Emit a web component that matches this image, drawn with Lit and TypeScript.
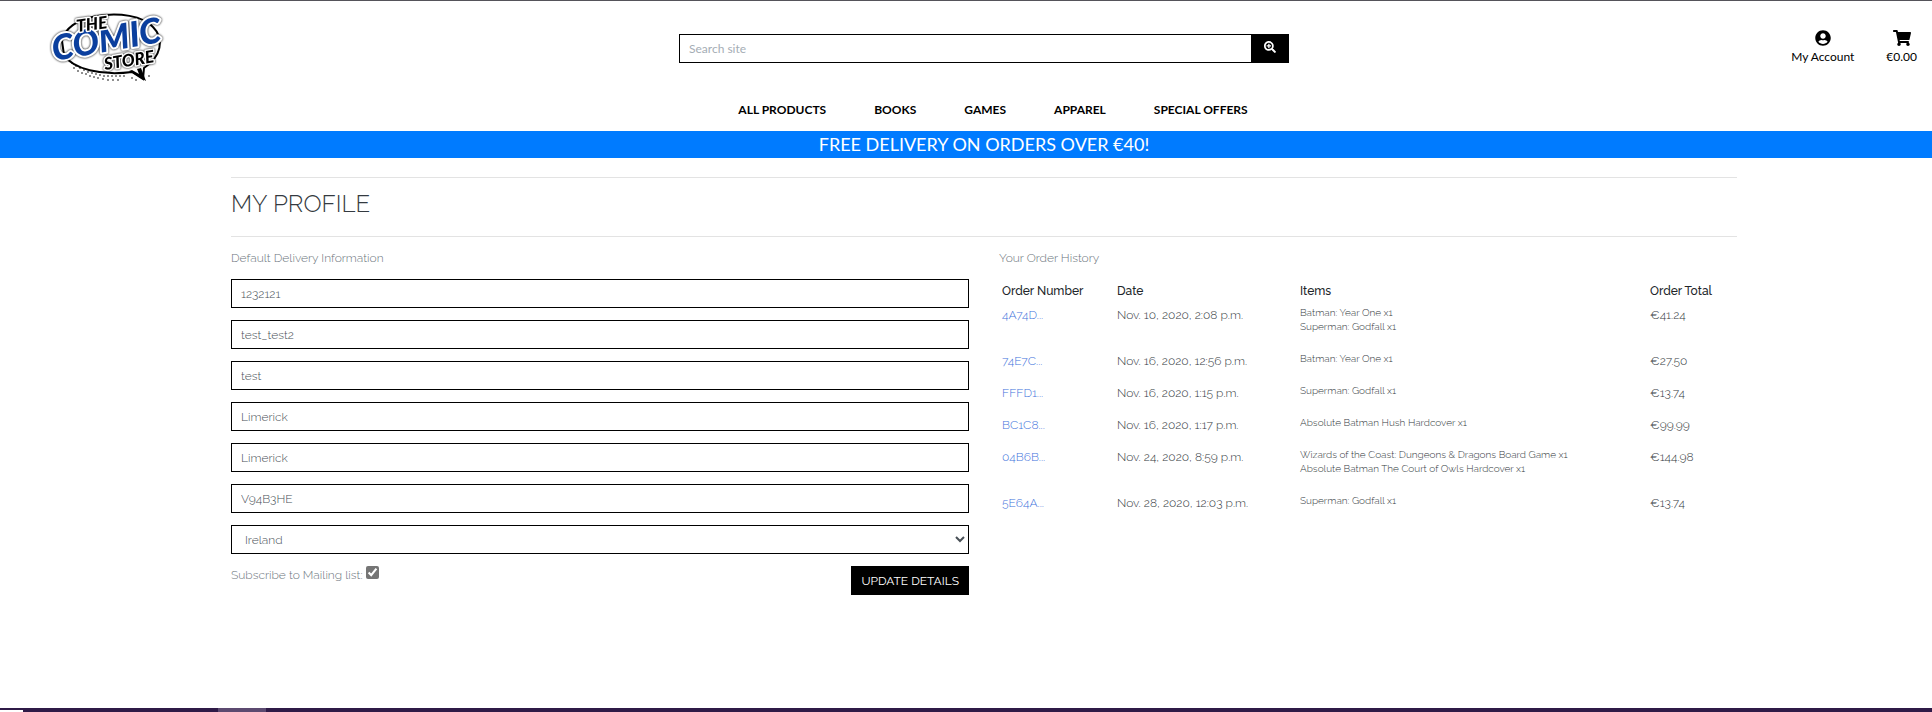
import { LitElement, html, css, svg } from "lit";
import { customElement, state } from "lit/decorators.js";

interface Order {
  id: string;
  date: string;
  items: string[];
  total: string;
}

const NAV = ["ALL PRODUCTS", "BOOKS", "GAMES", "APPAREL", "SPECIAL OFFERS"];

const ORDERS: Order[] = [
  { id: "4A74D...", date: "Nov. 10, 2020, 2:08 p.m.", items: ["Batman: Year One x1", "Superman: Godfall x1"], total: "€41.24" },
  { id: "74E7C...", date: "Nov. 16, 2020, 12:56 p.m.", items: ["Batman: Year One x1"], total: "€27.50" },
  { id: "FFFD1...", date: "Nov. 16, 2020, 1:15 p.m.", items: ["Superman: Godfall x1"], total: "€13.74" },
  { id: "BC1C8...", date: "Nov. 16, 2020, 1:17 p.m.", items: ["Absolute Batman Hush Hardcover x1"], total: "€99.99" },
  {
    id: "04B6B...",
    date: "Nov. 24, 2020, 8:59 p.m.",
    items: ["Wizards of the Coast: Dungeons & Dragons Board Game x1", "Absolute Batman The Court of Owls Hardcover x1"],
    total: "€144.98",
  },
  { id: "5E64A...", date: "Nov. 28, 2020, 12:03 p.m.", items: ["Superman: Godfall x1"], total: "€13.74" },
];

const FIELDS = [
  { name: "phone", label: "Phone number", value: "1232121" },
  { name: "street1", label: "Street address 1", value: "test_test2" },
  { name: "street2", label: "Street address 2", value: "test" },
  { name: "town", label: "Town or city", value: "Limerick" },
  { name: "county", label: "County", value: "Limerick" },
  { name: "postcode", label: "Postal code", value: "V94B3HE" },
];

const searchIcon = html`<svg class="icon-search" viewBox="0 0 512 512" aria-hidden="true"><path d="M304 192v32c0 6.600-5.400 12-12 12h-56v56c0 6.600-5.400 12-12 12h-32c-6.600 0-12-5.400-12-12v-56h-56c-6.600 0-12-5.400-12-12v-32c0-6.600 5.400-12 12-12h56v-56c0-6.600 5.400-12 12-12h32c6.600 0 12 5.400 12 12v56h56c6.600 0 12 5.400 12 12zm201 284.700L476.700 505c-9.400 9.400-24.600 9.400-33.900 0L343 405.300c-4.500-4.500-7-10.600-7-17V372c-35.300 27.600-79.700 44-128 44C93.100 416 0 322.900 0 208S93.100 0 208 0s208 93.100 208 208c0 48.300-16.400 92.700-44 128h16.300c6.400 0 12.500 2.500 17 7l99.700 99.700c9.300 9.400 9.300 24.600 0 34zM344 208c0-75.200-60.800-136-136-136S72 132.800 72 208s60.800 136 136 136 136-60.800 136-136z"/></svg>`;

const userIcon = html`<svg class="icon-user" viewBox="0 0 496 512" aria-hidden="true"><path d="M248 8C111 8 0 119 0 256s111 248 248 248 248-111 248-248S385 8 248 8zm0 96c48.600 0 88 39.400 88 88s-39.400 88-88 88-88-39.400-88-88 39.400-88 88-88zm0 344c-58.700 0-111.300-26.600-146.500-68.200 18.800-35.400 55.600-59.800 98.500-59.800 2.400 0 4.800.4 7.100 1.100 13 4.200 26.600 6.900 40.900 6.900 14.300 0 28-2.700 40.900-6.900 2.300-.7 4.700-1.100 7.100-1.100 42.900 0 79.700 24.400 98.500 59.800C359.300 421.400 306.700 448 248 448z"/></svg>`;

const cartIcon = html`<svg class="icon-cart" viewBox="0 0 576 512" aria-hidden="true"><path d="M528.120 301.319l47.273-208C578.806 78.301 567.391 64 551.990 64H159.208l-9.166-44.810C147.758 8.021 137.930 0 126.529 0H24C10.745 0 0 10.745 0 24v16c0 13.255 10.745 24 24 24h69.883l70.248 343.435C147.325 417.100 136 435.222 136 456c0 30.928 25.072 56 56 56s56-25.072 56-56c0-15.674-6.447-29.835-16.824-40h209.647C430.447 426.165 424 440.326 424 456c0 30.928 25.072 56 56 56s56-25.072 56-56c0-22.172-12.888-41.332-31.579-50.405l5.517-24.276c3.413-15.018-8.002-29.319-23.403-29.319H218.117l-6.545-32h293.145c11.206 0 20.920-7.754 23.403-18.681z"/></svg>`;

// Rows of halftone dots along the lower edge of the speech bubble.
const dots = [
  [27, 60], [31, 63], [35, 65], [39, 67], [43, 69], [47, 70], [51, 71], [55, 72], [59, 73], [63, 73], [67, 73], [71, 73], [75, 73], [79, 73],
  [29, 65], [33, 68], [37, 70], [41, 71], [45, 73], [49, 74], [53, 75], [58, 76], [63, 77], [68, 77], [73, 77], [87, 75], [91, 77], [104, 73],
].map(([x, y]) => svg`<circle cx=${x} cy=${y} r="0.8" />`);

const logo = html`<svg class="logo-art" viewBox="0 3 130 84" role="img" aria-label="The Comic Store">
  <path class="bubble" d="M17 38C19 26 32 16 52 13C74 9 98 13 108 24C120 36 116 54 99 65L98 76L87 69C56 73 28 66 19 52Z" />
  <g>${dots}</g>
  <path d="M84 68L101 78L96 65L92 66L94 71L87 67Z" />
  <g class="word">
    <text x="9" y="58" transform="rotate(-10 9 58)" class="comic">COMIC</text>
    <text x="32" y="29" transform="rotate(-7 32 29)" class="small">THE</text>
    <text x="60" y="67" transform="rotate(-9 60 67)" class="small">STORE</text>
  </g>
</svg>`;

@customElement("app-root")
export class AppRoot extends LitElement {
  @state() private subscribed = true;

  static styles = css`
    :host {
      --ui: Lato, sans-serif;
      --body: Raleway, Lato, sans-serif;
      display: flex;
      flex-direction: column;
      min-height: 100vh;
      box-sizing: border-box;
      border-top: 1px solid #55535a;
      background: #fff;
      font-family: var(--ui);
      color: #000;
    }
    *, *::before, *::after { box-sizing: border-box; }
    a { color: inherit; text-decoration: none; }
    .header {
      display: grid;
      grid-template-columns: 1fr minmax(200px, 610px) 1fr;
      align-items: center;
      padding: 5px 15px 0 51px;
      height: 86px;
    }
    .logo { justify-self: start; margin-left: -6px; }
    .logo-art { display: block; width: 130px; height: 84px; }
    .bubble { fill: #fff; stroke: #000; stroke-width: 2; }
    .word { filter: drop-shadow(0 0 1px #000); }
    .word text { paint-order: stroke; stroke: #fff; stroke-linejoin: round; }
    .comic, .small { font-family: Lato, sans-serif; font-weight: 900; font-style: italic; }
    .comic { font-size: 35px; fill: #0b3f9e; stroke-width: 4; }
    .small { font-size: 17px; stroke-width: 3; }
    .search { display: flex; height: 29px; }
    .search-box {
      flex: 1;
      min-width: 0;
      border: 1px solid #000;
      border-right: 0;
      padding: 0 9px;
      font: 12px var(--ui);
      background: #fff;
      outline: none;
      border-radius: 0;
    }
    .search-box::placeholder { color: #a5adb5; opacity: 1; }
    .search-button {
      width: 38px;
      display: flex;
      align-items: center;
      justify-content: center;
      padding: 0 0 2px;
      border: 0;
      background: #000;
    }
    .icon-search { width: 12px; height: 12px; fill: #fff; }
    .account { justify-self: end; display: flex; gap: 32px; }
    .account-link {
      display: flex;
      flex-direction: column;
      align-items: center;
      gap: 3px;
      padding-bottom: 2px;
      font-size: 12px;
      line-height: 16px;
    }
    .icon-user { width: 16px; height: 16px; }
    .icon-cart { width: 18px; height: 16px; }
    .nav {
      display: flex;
      justify-content: center;
      gap: 48px;
      padding: 14px 0 12px 54px;
      font-size: 12px;
      font-weight: 700;
      line-height: 18px;
    }
    .banner {
      padding-left: 36px;
      background: #007bff;
      color: #fff;
      font-size: 18px;
      line-height: 27px;
      text-align: center;
    }
    .page { flex: 1; padding: 19px 0 0 36px; }
    .container { max-width: 1506px; margin: 0 auto; }
    .title {
      margin: 0 0 12px;
      padding: 13px 0 19px;
      border: solid #e3e3e3;
      border-width: 1px 0;
      font: 300 24px/26px var(--body);
      color: #343a40;
    }
    .columns { display: grid; grid-template-columns: 1fr 1fr; gap: 30px; }
    .lead { margin: 0; font: 300 12px/18px var(--body); color: #6c757d; }
    .form { display: flex; flex-direction: column; gap: 12px; margin-top: 12px; }
    .field {
      width: 100%;
      height: 29px;
      padding: 0 9px;
      border: 1px solid #000;
      border-radius: 0;
      background-color: #fff;
      font: 300 12px var(--body);
      color: #495057;
    }
    .actions { display: flex; justify-content: space-between; align-items: flex-start; }
    .subscribe { display: flex; gap: 3px; font: 300 12px/18px var(--body); color: #6c757d; }
    .tick { width: 13px; height: 13px; margin: 0; accent-color: #757575; }
    .update {
      height: 29px;
      padding: 0 10px;
      border: 0;
      background: #000;
      color: #fff;
      font: 400 12px var(--body);
    }
    .orders {
      width: 100%;
      margin-top: 13px;
      border-collapse: collapse;
      table-layout: fixed;
      font: 300 12px/18px var(--body);
      color: #343a40;
    }
    .orders th, .orders td { padding: 2px 3px; text-align: left; vertical-align: top; }
    .orders th { padding-bottom: 4px; font-weight: 500; color: #212529; }
    .col-id { width: 115px; }
    .col-date { width: 183px; }
    .col-total { width: 90px; }
    .order-link { color: #3f74dc; }
    .items { margin: 0 0 14px; padding: 0; list-style: none; font-size: 10px; line-height: 14px; }
    .taskbar { display: flex; height: 4px; background: #2f1a47; }
    .taskbar-start { width: 23px; height: 2px; margin-top: 2px; background: #fff; }
    .taskbar-active { width: 48px; margin-left: 195px; background: #5c4a70; }
  `;

  render() {
    return html`
      <header class="header">
        <a class="logo" href="#">${logo}</a>
        <form class="search" @submit=${(e: Event) => e.preventDefault()}>
          <input class="search-box" type="text" name="q" placeholder="Search site" aria-label="Search site" />
          <button class="search-button" type="submit" aria-label="Search">${searchIcon}</button>
        </form>
        <div class="account">
          <a class="account-link" href="#">${userIcon}<span>My Account</span></a>
          <a class="account-link" href="#">${cartIcon}<span>€0.00</span></a>
        </div>
      </header>
      <nav class="nav">${NAV.map((n) => html`<a href="#">${n}</a>`)}</nav>
      <div class="banner">FREE DELIVERY ON ORDERS OVER €40!</div>
      <main class="page">
        <div class="container">
          <h2 class="title">MY PROFILE</h2>
          <div class="columns">
            <section>
              <p class="lead">Default Delivery Information</p>
              <form class="form" @submit=${(e: Event) => e.preventDefault()}>
                ${FIELDS.map((f) => html`<input class="field" type="text" name=${f.name} aria-label=${f.label} .value=${f.value} />`)}
                <select class="field" name="country" aria-label="Country">
                  <option>Ireland</option>
                </select>
                <div class="actions">
                  <label class="subscribe">
                    Subscribe to Mailing list:
                    <input class="tick" type="checkbox" .checked=${this.subscribed}
                      @change=${(e: Event) => (this.subscribed = (e.target as HTMLInputElement).checked)} />
                  </label>
                  <button class="update" type="submit">UPDATE DETAILS</button>
                </div>
              </form>
            </section>
            <section>
              <p class="lead">Your Order History</p>
              <table class="orders">
                <thead>
                  <tr>
                    <th class="col-id">Order Number</th>
                    <th class="col-date">Date</th>
                    <th>Items</th>
                    <th class="col-total">Order Total</th>
                  </tr>
                </thead>
                <tbody>
                  ${ORDERS.map(
                    (o) => html`<tr>
                      <td><a class="order-link" href="#">${o.id}</a></td>
                      <td>${o.date}</td>
                      <td><ul class="items">${o.items.map((i) => html`<li>${i}</li>`)}</ul></td>
                      <td>${o.total}</td>
                    </tr>`
                  )}
                </tbody>
              </table>
            </section>
          </div>
        </div>
      </main>
      <div class="taskbar"><span class="taskbar-start"></span><span class="taskbar-active"></span></div>
    `;
  }
}
